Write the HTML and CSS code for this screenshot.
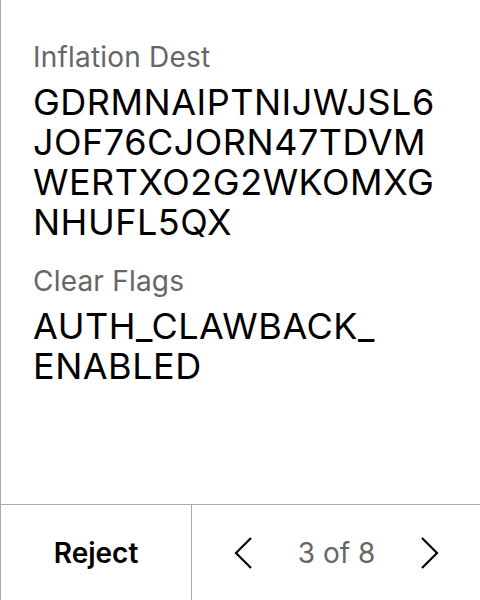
FILE: index.html
```html
<!DOCTYPE html>
<html>
<head>
<meta charset="utf-8">
<link rel="stylesheet" href="styles.css">
</head>
<body>
<div class="screen">
  <main class="details">
    <section class="field">
      <div class="label">Inflation Dest</div>
      <div class="value key">GDRMNAIPTNIJWJSL6JOF76CJORN47TDVMWERTXO2G2WKOMXGNHUFL5QX</div>
    </section>
    <section class="field">
      <div class="label">Clear Flags</div>
      <div class="value">AUTH_CLAWBACK_<wbr>ENABLED</div>
    </section>
  </main>
  <footer class="bar">
    <button class="reject">Reject</button>
    <div class="pager">
      <button class="chev" aria-label="Previous">
        <svg width="24" height="34" viewBox="0 0 24 34"><polyline points="20,2 5,17 20,32" fill="none" stroke="#000" stroke-width="2.2"/></svg>
      </button>
      <span class="count">3 of 8</span>
      <button class="chev" aria-label="Next">
        <svg width="24" height="34" viewBox="0 0 24 34"><polyline points="4,2 19,17 4,32" fill="none" stroke="#000" stroke-width="2.2"/></svg>
      </button>
    </div>
  </footer>
</div>
</body>
</html>
```
FILE: styles.css
```css
html, body {
  margin: 0;
  padding: 0;
  background: #fff;
}
.screen {
  width: 480px;
  height: 600px;
  box-sizing: border-box;
  border-left: 1px solid #aaa;
  display: flex;
  flex-direction: column;
  font-family: Inter, "Noto Sans", sans-serif;
  color: #000;
}
.details {
  flex: 1;
  padding: 40px 40px 0 32px;
  display: flex;
  flex-direction: column;
  gap: 22px;
}
.field {
  display: flex;
  flex-direction: column;
  gap: 8px;
}
.label {
  font-size: 28px;
  line-height: 34px;
  letter-spacing: 0.2px;
  color: #666;
}
.value {
  font-size: 36px;
  line-height: 40px;
  letter-spacing: 0.5px;
  color: #000;
}
.key {
  word-break: break-all;
}
.bar {
  height: 95px;
  border-top: 1px solid #aaa;
  display: flex;
}
button {
  font-family: inherit;
  background: none;
  border: 0;
  padding: 0;
  margin: 0;
  color: inherit;
}
.reject {
  width: 191px;
  border-right: 1px solid #aaa;
  font-size: 28px;
  font-weight: 600;
  color: #000;
}
.pager {
  flex: 1;
  display: flex;
  align-items: center;
  justify-content: space-between;
  padding: 0 38px 0 39px;
}
.chev {
  display: flex;
  width: 24px;
  height: 34px;
}
.count {
  font-size: 28px;
  color: #666;
}
```
